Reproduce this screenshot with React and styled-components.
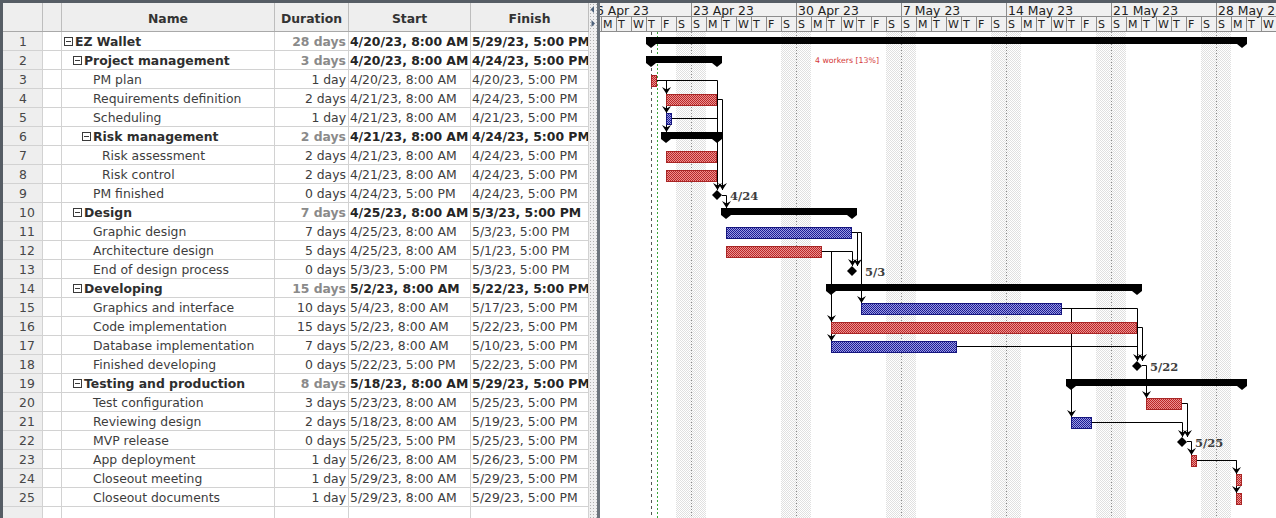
import styled, { createGlobalStyle } from 'styled-components';

const GlobalStyle = createGlobalStyle`
  html, body {
    margin: 0;
    padding: 0;
    background: #ffffff;
    overflow: hidden;
  }
  body {
    font-family: 'DejaVu Sans', 'Noto Sans', sans-serif;
  }
`;

const COLS = '40px 19px 213px 74px 122px 118px';
const FRAME = '#565d65';

const Window = styled.div`
  width: 1276px;
  height: 518px;
  display: flex;
  border-top: 3px solid ${FRAME};
  box-sizing: border-box;
  overflow: hidden;
`;

const TablePane = styled.div`
  width: 589px;
  flex: none;
  display: flex;
  flex-direction: column;
  border-left: 3px solid ${FRAME};
  box-sizing: border-box;
  overflow: hidden;
`;

const HeaderRow = styled.div`
  display: grid;
  grid-template-columns: ${COLS};
  height: 29px;
  flex: none;
  background: #eeeeee;
  border-bottom: 1px solid #a9a9a9;
  box-sizing: border-box;
`;

const HeaderCell = styled.div`
  display: flex;
  align-items: center;
  justify-content: center;
  padding-top: 2px;
  border-right: 1px solid #bdbdbd;
  font-size: 12.4px;
  font-weight: bold;
  color: #333333;
`;

const Row = styled.div`
  display: grid;
  grid-template-columns: ${COLS};
  height: 19px;
  flex: none;
  border-bottom: 1px solid #d2d2d2;
  box-sizing: border-box;
`;

const Cell = styled.div`
  border-right: 1px solid #d2d2d2;
  font-size: 12.4px;
  line-height: 19px;
  white-space: nowrap;
  overflow: hidden;
  color: #3d3d3d;
  font-weight: ${p => (p.$bold ? 'bold' : 'normal')};
`;

const NumCell = styled(Cell)`
  background: #eeeeee;
  padding-left: 16px;
  color: #474747;
`;

const NameCell = styled(Cell)`
  display: flex;
  align-items: center;
  padding-top: 1px;
  padding-left: ${p => 2 + p.$level * 9}px;
  color: ${p => (p.$bold ? '#2e2e2e' : '#3d3d3d')};
`;

const DurCell = styled(Cell)`
  text-align: right;
  padding-right: 2px;
  color: ${p => (p.$bold ? '#8a8a8a' : '#3d3d3d')};
`;

const DateCell = styled(Cell)`
  padding-left: 1px;
  color: ${p => (p.$bold ? '#252525' : '#3d3d3d')};
`;

const Expander = styled.span`
  width: 9px;
  height: 9px;
  flex: none;
  margin-right: 2px;
  box-sizing: border-box;
  border: ${p => (p.$empty ? 'none' : '1px solid #3a3a3a')};
  display: flex;
  align-items: center;
  justify-content: center;
  &::after {
    content: '';
    display: ${p => (p.$empty ? 'none' : 'block')};
    width: 5px;
    height: 1px;
    background: #3a3a3a;
  }
`;

const Splitter = styled.div`
  width: 11px;
  flex: none;
  box-sizing: border-box;
  border-right: 3px solid #6c747c;
  background-color: #f0f0f0;
  background-image: radial-gradient(circle, #b0b0b0 0.7px, transparent 0.9px);
  background-size: 3px 3px;
  padding-top: 2px;
`;

const ChartPane = styled.div`
  flex: 1;
  display: flex;
  flex-direction: column;
  overflow: hidden;
`;

const ChartHeader = styled.div`
  height: 29px;
  flex: none;
  background: #f0f0f0;
  overflow: hidden;
`;

const Track = styled.div`
  display: flex;
  width: max-content;
  margin-left: -14px;
  height: ${p => p.$h}px;
  border-bottom: 1px solid #8d8d8d;
  box-sizing: border-box;
`;

const WeekCell = styled.div`
  width: 105px;
  flex: none;
  box-sizing: border-box;
  border-left: 1px solid #8d8d8d;
  padding-left: 1px;
  font-size: 12.4px;
  line-height: 15px;
  color: #222222;
  white-space: nowrap;
`;

const DayCell = styled.div`
  width: 15px;
  flex: none;
  box-sizing: border-box;
  border-left: 1px solid #8d8d8d;
  padding-left: 1px;
  font-size: 11px;
  line-height: 16px;
  color: #222222;
`;

const ChartSvg = styled.svg`
  display: block;
  flex: none;
`;

const rows = [
  { name: 'EZ Wallet', level: 0, sum: true, dur: '28 days', start: '4/20/23, 8:00 AM', finish: '5/29/23, 5:00 PM' },
  { name: 'Project management', level: 1, sum: true, dur: '3 days', start: '4/20/23, 8:00 AM', finish: '4/24/23, 5:00 PM' },
  { name: 'PM plan', level: 2, dur: '1 day', start: '4/20/23, 8:00 AM', finish: '4/20/23, 5:00 PM' },
  { name: 'Requirements definition', level: 2, dur: '2 days', start: '4/21/23, 8:00 AM', finish: '4/24/23, 5:00 PM' },
  { name: 'Scheduling', level: 2, dur: '1 day', start: '4/21/23, 8:00 AM', finish: '4/21/23, 5:00 PM' },
  { name: 'Risk management', level: 2, sum: true, dur: '2 days', start: '4/21/23, 8:00 AM', finish: '4/24/23, 5:00 PM' },
  { name: 'Risk assessment', level: 3, dur: '2 days', start: '4/21/23, 8:00 AM', finish: '4/24/23, 5:00 PM' },
  { name: 'Risk control', level: 3, dur: '2 days', start: '4/21/23, 8:00 AM', finish: '4/24/23, 5:00 PM' },
  { name: 'PM finished', level: 2, dur: '0 days', start: '4/24/23, 5:00 PM', finish: '4/24/23, 5:00 PM' },
  { name: 'Design', level: 1, sum: true, dur: '7 days', start: '4/25/23, 8:00 AM', finish: '5/3/23, 5:00 PM' },
  { name: 'Graphic design', level: 2, dur: '7 days', start: '4/25/23, 8:00 AM', finish: '5/3/23, 5:00 PM' },
  { name: 'Architecture design', level: 2, dur: '5 days', start: '4/25/23, 8:00 AM', finish: '5/1/23, 5:00 PM' },
  { name: 'End of design process', level: 2, dur: '0 days', start: '5/3/23, 5:00 PM', finish: '5/3/23, 5:00 PM' },
  { name: 'Developing', level: 1, sum: true, dur: '15 days', start: '5/2/23, 8:00 AM', finish: '5/22/23, 5:00 PM' },
  { name: 'Graphics and interface', level: 2, dur: '10 days', start: '5/4/23, 8:00 AM', finish: '5/17/23, 5:00 PM' },
  { name: 'Code implementation', level: 2, dur: '15 days', start: '5/2/23, 8:00 AM', finish: '5/22/23, 5:00 PM' },
  { name: 'Database implementation', level: 2, dur: '7 days', start: '5/2/23, 8:00 AM', finish: '5/10/23, 5:00 PM' },
  { name: 'Finished developing', level: 2, dur: '0 days', start: '5/22/23, 5:00 PM', finish: '5/22/23, 5:00 PM' },
  { name: 'Testing and production', level: 1, sum: true, dur: '8 days', start: '5/18/23, 8:00 AM', finish: '5/29/23, 5:00 PM' },
  { name: 'Test configuration', level: 2, dur: '3 days', start: '5/23/23, 8:00 AM', finish: '5/25/23, 5:00 PM' },
  { name: 'Reviewing design', level: 2, dur: '2 days', start: '5/18/23, 8:00 AM', finish: '5/19/23, 5:00 PM' },
  { name: 'MVP release', level: 2, dur: '0 days', start: '5/25/23, 5:00 PM', finish: '5/25/23, 5:00 PM' },
  { name: 'App deployment', level: 2, dur: '1 day', start: '5/26/23, 8:00 AM', finish: '5/26/23, 5:00 PM' },
  { name: 'Closeout meeting', level: 2, dur: '1 day', start: '5/29/23, 8:00 AM', finish: '5/29/23, 5:00 PM' },
  { name: 'Closeout documents', level: 2, dur: '1 day', start: '5/29/23, 8:00 AM', finish: '5/29/23, 5:00 PM' },
];

// chart items: day index counted from Sun 16 Apr 2023
const bars = [
  { row: 1, kind: 'sum', s: 4, e: 43 },
  { row: 2, kind: 'sum', s: 4, e: 8 },
  { row: 3, kind: 'red', s: 4, e: 4 },
  { row: 4, kind: 'red', s: 5, e: 8 },
  { row: 5, kind: 'blue', s: 5, e: 5 },
  { row: 6, kind: 'sum', s: 5, e: 8 },
  { row: 7, kind: 'red', s: 5, e: 8 },
  { row: 8, kind: 'red', s: 5, e: 8 },
  { row: 9, kind: 'ms', e: 8, label: '4/24' },
  { row: 10, kind: 'sum', s: 9, e: 17 },
  { row: 11, kind: 'blue', s: 9, e: 17 },
  { row: 12, kind: 'red', s: 9, e: 15 },
  { row: 13, kind: 'ms', e: 17, label: '5/3' },
  { row: 14, kind: 'sum', s: 16, e: 36 },
  { row: 15, kind: 'blue', s: 18, e: 31 },
  { row: 16, kind: 'red', s: 16, e: 36 },
  { row: 17, kind: 'blue', s: 16, e: 24 },
  { row: 18, kind: 'ms', e: 36, label: '5/22' },
  { row: 19, kind: 'sum', s: 32, e: 43 },
  { row: 20, kind: 'red', s: 37, e: 39 },
  { row: 21, kind: 'blue', s: 32, e: 33 },
  { row: 22, kind: 'ms', e: 39, label: '5/25' },
  { row: 23, kind: 'red', s: 40, e: 40 },
  { row: 24, kind: 'red', s: 43, e: 43 },
  { row: 25, kind: 'red', s: 43, e: 43 },
];

const links = [
  { pts: [[657, 80.5], [666.5, 80.5], [666.5, 94]], arrow: true },
  { pts: [[666.5, 80.5], [666.5, 113]], arrow: true },
  { pts: [[666.5, 80.5], [666.5, 132]], arrow: true },
  { pts: [[657, 80.5], [717.5, 80.5], [717.5, 190]], arrow: true },
  { pts: [[717, 99.5], [722.5, 99.5], [722.5, 190]], arrow: true },
  { pts: [[672, 118.5], [717.5, 118.5]] },
  { pts: [[722, 195.5], [726.5, 195.5], [726.5, 208]], arrow: true },
  { pts: [[852, 232.5], [857.5, 232.5], [857.5, 266]], arrow: true },
  { pts: [[857.5, 232.5], [861.5, 232.5], [861.5, 303]], arrow: true },
  { pts: [[822, 251.5], [852.5, 251.5], [852.5, 266]], arrow: true },
  { pts: [[831.5, 251.5], [831.5, 322]], arrow: true },
  { pts: [[831.5, 322], [831.5, 341]], arrow: true },
  { pts: [[1062, 308.5], [1137.5, 308.5], [1137.5, 361]], arrow: true },
  { pts: [[1071.5, 308.5], [1071.5, 417]], arrow: true },
  { pts: [[1137, 327.5], [1142.5, 327.5], [1142.5, 361]], arrow: true },
  { pts: [[957, 346.5], [1137.5, 346.5]] },
  { pts: [[1142, 365.5], [1146.5, 365.5], [1146.5, 398]], arrow: true },
  { pts: [[1182, 403.5], [1187.5, 403.5], [1187.5, 437]], arrow: true },
  { pts: [[1092, 422.5], [1182.5, 422.5], [1182.5, 437]], arrow: true },
  { pts: [[1187, 441.5], [1191.5, 441.5], [1191.5, 455]], arrow: true },
  { pts: [[1197, 460.5], [1236.5, 460.5], [1236.5, 474]], arrow: true },
  { pts: [[1236.5, 460.5], [1236.5, 493]], arrow: true },
];

const weeks = ['16 Apr 23', '23 Apr 23', '30 Apr 23', '7 May 23', '14 May 23', '21 May 23', '28 May 23'];
const dayLetters = ['S', 'M', 'T', 'W', 'T', 'F', 'S'];

const X0 = 586;
const xs = d => X0 + 15 * d + 5;
const xe = d => X0 + 15 * d + 11;
const rowTop = n => 32 + 19 * (n - 1);

function SummaryBar({ row, s, e }) {
  const a = xs(s);
  const b = xe(e);
  const t = rowTop(row) + 5;
  const bb = t + 7;
  const tip = t + 11;
  const pts = [
    [a - 5, t], [b + 5, t], [b + 5, bb], [b, tip], [b - 5, bb],
    [a + 5, bb], [a, tip], [a - 5, bb],
  ].map(p => p.join(',')).join(' ');
  return <polygon points={pts} fill="#000" />;
}

function TaskBar({ row, s, e, kind }) {
  const a = xs(s);
  const b = xe(e);
  const t = rowTop(row) + 5;
  return (
    <rect
      x={a + 0.5}
      y={t + 0.5}
      width={b - a - 1}
      height={11}
      fill={kind === 'red' ? 'url(#redHatch)' : 'url(#blueHatch)'}
      stroke={kind === 'red' ? '#a82626' : '#16167e'}
      strokeWidth="1"
    />
  );
}

function Milestone({ row, e, label }) {
  const x = xe(e);
  const y = rowTop(row) + 11;
  return (
    <g>
      <polygon points={`${x},${y - 5} ${x + 5},${y} ${x},${y + 5} ${x - 5},${y}`} fill="#000" />
      <text
        x={x + 13}
        y={y + 4.5}
        fontFamily="'DejaVu Serif', 'Liberation Serif', serif"
        fontWeight="bold"
        fontSize="11.5"
        fill="#3d3d3d"
      >
        {label}
      </text>
    </g>
  );
}

function Arrow({ x, y }) {
  return <path d={`M${x} ${y} L${x - 4.5} ${y - 7} L${x} ${y - 4.5} L${x + 4.5} ${y - 7} Z`} fill="#000" />;
}

function Chart() {
  const weekStarts = [1, 2, 3, 4, 5, 6].map(k => X0 + 105 * k);
  return (
    <ChartSvg width="676" height="486" viewBox="600 32 676 486">
      <defs>
        <pattern id="redHatch" width="2" height="2" patternUnits="userSpaceOnUse">
          <rect width="2" height="2" fill="#e99292" />
          <rect width="1" height="1" fill="#bc2626" />
          <rect x="1" y="1" width="1" height="1" fill="#bc2626" />
        </pattern>
        <pattern id="blueHatch" width="2" height="2" patternUnits="userSpaceOnUse">
          <rect width="2" height="2" fill="#9c9ce2" />
          <rect width="1" height="1" fill="#1c1c94" />
          <rect x="1" y="1" width="1" height="1" fill="#1c1c94" />
        </pattern>
        <pattern id="weekend" width="2" height="2" patternUnits="userSpaceOnUse">
          <rect width="2" height="2" fill="#ffffff" />
          <rect width="1" height="1" fill="#e0e0e0" />
          <rect x="1" y="1" width="1" height="1" fill="#e0e0e0" />
        </pattern>
      </defs>
      <rect x="600" y="32" width="676" height="486" fill="#ffffff" />
      {weekStarts.map(x => (
        <rect key={`w${x}`} x={x - 15} y="32" width="30" height="486" fill="url(#weekend)" />
      ))}
      {weekStarts.map(x => (
        <line key={`l${x}`} x1={x + 0.5} y1="32" x2={x + 0.5} y2="518" stroke="#8a8a8a" strokeDasharray="1 2" />
      ))}
      <line x1="651.5" y1="32" x2="651.5" y2="518" stroke="#555" strokeDasharray="3 3" />
      <line x1="657.5" y1="32" x2="657.5" y2="518" stroke="#3aa83a" strokeDasharray="2 2" />
      {links.map((l, i) => (
        <polyline key={`d${i}`} points={l.pts.map(p => p.join(',')).join(' ')} fill="none" stroke="#000" strokeWidth="1" />
      ))}
      {bars.map(b => {
        if (b.kind === 'sum') return <SummaryBar key={b.row} {...b} />;
        if (b.kind === 'ms') return null;
        return <TaskBar key={b.row} {...b} />;
      })}
      {links.filter(l => l.arrow).map((l, i) => {
        const [x, y] = l.pts[l.pts.length - 1];
        return <Arrow key={`a${i}`} x={x} y={y} />;
      })}
      {bars.filter(b => b.kind === 'ms').map(b => <Milestone key={b.row} {...b} />)}
      <text x="815" y="63" fontFamily="'DejaVu Sans', sans-serif" fontSize="7.8" fill="#d43a3a">
        4 workers [13%]
      </text>
    </ChartSvg>
  );
}

export default function App() {
  return (
    <>
      <GlobalStyle />
      <Window>
        <TablePane>
          <HeaderRow>
            <HeaderCell />
            <HeaderCell />
            <HeaderCell>Name</HeaderCell>
            <HeaderCell>Duration</HeaderCell>
            <HeaderCell>Start</HeaderCell>
            <HeaderCell>Finish</HeaderCell>
          </HeaderRow>
          {rows.map((r, i) => (
            <Row key={i}>
              <NumCell>{i + 1}</NumCell>
              <Cell />
              <NameCell $level={r.level} $bold={r.sum}>
                <Expander $empty={!r.sum} />
                {r.name}
              </NameCell>
              <DurCell $bold={r.sum}>{r.dur}</DurCell>
              <DateCell $bold={r.sum}>{r.start}</DateCell>
              <DateCell $bold={r.sum}>{r.finish}</DateCell>
            </Row>
          ))}
          <Row>
            <NumCell />
            <Cell />
            <Cell />
            <Cell />
            <Cell />
            <Cell />
          </Row>
        </TablePane>
        <Splitter>
          <svg width="8" height="24" viewBox="0 0 8 24">
            <path d="M5 1 L1.5 4.5 L5 8 Z" fill="#50647c" />
            <path d="M2.5 15 L6 18.5 L2.5 22 Z" fill="#50647c" />
          </svg>
        </Splitter>
        <ChartPane>
          <ChartHeader>
            <Track $h={14}>
              {weeks.map(w => (
                <WeekCell key={w}>{w}</WeekCell>
              ))}
            </Track>
            <Track $h={15}>
              {weeks.flatMap(w => dayLetters.map((d, j) => <DayCell key={`${w}${j}`}>{d}</DayCell>))}
            </Track>
          </ChartHeader>
          <Chart />
        </ChartPane>
      </Window>
    </>
  );
}
